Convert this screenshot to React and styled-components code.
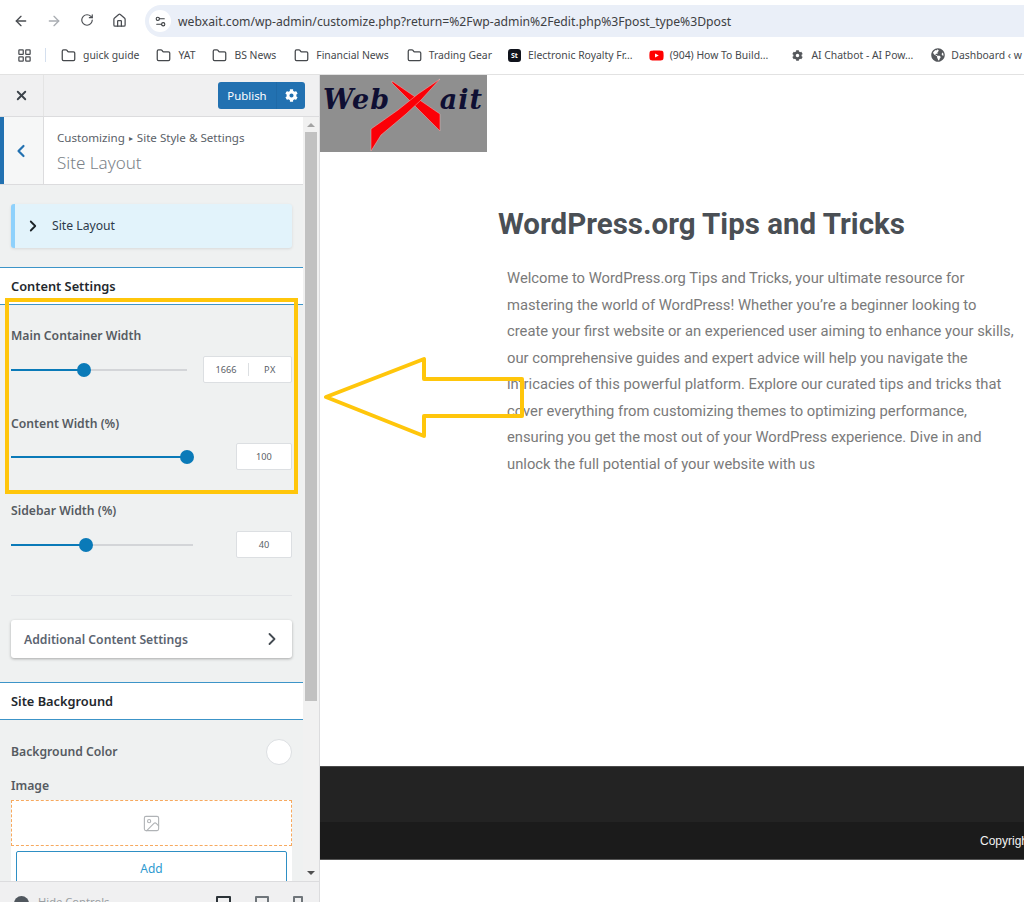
import React from 'react'
import styled, { createGlobalStyle } from 'styled-components'
import {
  ArrowLeft,
  ArrowRight,
  RotateCw,
  Home,
  Folder,
  LayoutGrid,
  Settings2,
  X,
  ChevronLeft,
  ChevronRight,
  Image as ImageIcon,
} from 'lucide-react'
import { FaCog, FaYoutube, FaGlobeAmericas } from 'react-icons/fa'

const GlobalStyle = createGlobalStyle`
  html, body {
    margin: 0;
    padding: 0;
    height: 902px;
    overflow: hidden;
    background: #fff;
    font-family: "Noto Sans", "Open Sans", sans-serif;
  }
  * { box-sizing: border-box; }
`

const Page = styled.div`
  position: relative;
  width: 1024px;
  height: 902px;
  overflow: hidden;
`

const Chrome = styled.div`
  height: 75px;
  background: #fff;
  border-bottom: 1px solid #e2e2e2;
  padding-top: 5px;
`

const NavRow = styled.div`
  display: flex;
  align-items: center;
  height: 32px;
`

const NavButton = styled.div`
  width: 33px;
  display: flex;
  justify-content: center;
  color: ${(p) => (p.$off ? '#a9adb2' : '#4a4d52')};
`

const NavButtons = styled.div`
  display: flex;
  padding-left: 4px;
  width: 145px;
`

const UrlBar = styled.div`
  flex: 1;
  height: 32px;
  display: flex;
  align-items: center;
  gap: 7px;
  background: #eaeff8;
  border-radius: 16px 0 0 16px;
  padding-left: 4px;
  font-size: 12.2px;
  color: #3d4043;
  white-space: nowrap;
`

const SiteInfo = styled.div`
  width: 22px;
  height: 22px;
  border-radius: 50%;
  background: #fff;
  display: flex;
  align-items: center;
  justify-content: center;
  color: #3d4043;
`

const BookmarkRow = styled.div`
  display: flex;
  align-items: center;
  height: 28px;
  margin-top: 4px;
  padding-left: 17px;
  white-space: nowrap;
  overflow: hidden;
  svg { flex-shrink: 0; }
`

const BookmarkSep = styled.div`
  width: 1px;
  height: 14px;
  background: #d4dfee;
  margin: 0 15px 0 13px;
  flex-shrink: 0;
`

const Bookmark = styled.div`
  display: flex;
  align-items: center;
  gap: ${(p) => p.$gap || 7}px;
  margin-right: ${(p) => p.$after || 17}px;
  font-size: 10.4px;
  color: #45484c;
  flex-shrink: 0;
`

const StBadge = styled.span`
  width: 13px;
  height: 13px;
  background: #10131c;
  border-radius: 3px;
  color: #fff;
  font-size: 7px;
  font-weight: 700;
  display: flex;
  align-items: center;
  justify-content: center;
`

const Main = styled.div`
  display: flex;
  height: 827px;
`

const Sidebar = styled.aside`
  width: 320px;
  flex-shrink: 0;
  display: flex;
  flex-direction: column;
  background: #eff1f1;
  border-right: 1px solid #dcdcde;
  color: #50575e;
`

const TopBar = styled.div`
  height: 42px;
  display: flex;
  align-items: center;
  justify-content: space-between;
  background: #f0f0f1;
  border-bottom: 1px solid #dcdcde;
  padding-right: 14px;
`

const CloseButton = styled.div`
  width: 44px;
  height: 41px;
  display: flex;
  align-items: center;
  justify-content: center;
  border-right: 1px solid #e4e4e4;
  color: #3c434a;
`

const PublishGroup = styled.div`
  width: 87px;
  height: 27px;
  display: flex;
  border-radius: 3px;
  overflow: hidden;
  background: #2271b1;
  color: #fff;
  font-size: 11.4px;
`

const PublishLabel = styled.div`
  width: 58px;
  display: flex;
  align-items: center;
  justify-content: center;
`

const PublishGear = styled.div`
  flex: 1;
  display: flex;
  align-items: center;
  justify-content: center;
  border-left: 1px solid #1f6aa8;
`

const Middle = styled.div`
  flex: 1;
  display: flex;
  min-height: 0;
`

const Panel = styled.div`
  width: 303px;
  overflow: hidden;
`

const Scrollbar = styled.div`
  width: 16px;
  display: flex;
  flex-direction: column;
  align-items: center;
  background: #f1f1f1;
`

const ScrollArrow = styled.div`
  width: 0;
  height: 0;
  border-left: 4px solid transparent;
  border-right: 4px solid transparent;
  ${(p) => (p.$down ? 'border-top: 4px solid #505050;' : 'border-bottom: 4px solid #a3a3a3;')}
  margin-top: ${(p) => (p.$down ? '170px' : '6px')};
`

const ScrollThumb = styled.div`
  width: 12px;
  height: 569px;
  background: #c1c1c1;
  margin-top: 5px;
`

const SectionHead = styled.div`
  height: 68px;
  display: flex;
  background: #fff;
  border-bottom: 1px solid #dcdcde;
`

const BackButton = styled.div`
  width: 44px;
  display: flex;
  align-items: center;
  justify-content: center;
  padding-right: 5px;
  background: #f6f7f7;
  border-left: 4px solid #2271b1;
  border-right: 1px solid #dcdcde;
  color: #2271b1;
`

const SectionTitles = styled.div`
  padding: 13px 0 0 13px;
`

const Crumb = styled.div`
  font-size: 11.6px;
  line-height: 16px;
  color: #5a6168;
`

const CrumbArrow = styled.span`
  font-size: 8px;
  margin: 0 4px;
  vertical-align: 1px;
`

const SectionTitle = styled.div`
  font-size: 17px;
  font-weight: 300;
  line-height: 24px;
  margin-top: 5px;
  color: #7b8288;
`

const SubCard = styled.div`
  height: 44px;
  margin: 19px 11px 19px;
  display: flex;
  align-items: center;
  gap: 10px;
  padding: 0 0 1px 9px;
  background: #e2f3fb;
  border-left: 4px solid #8ed1fc;
  border-radius: 3px;
  box-shadow: 0 1px 3px rgba(0, 0, 0, 0.1);
  font-size: 12.2px;
  color: #2d3a4a;
`

const Band = styled.div`
  height: 38px;
  display: flex;
  align-items: center;
  padding-left: 11px;
  background: #fff;
  border-top: 1px solid #3c94c8;
  border-bottom: 1px solid #3c94c8;
  font-size: 12.8px;
  font-weight: 600;
  color: #23282d;
`

const Settings = styled.div`
  padding: 0 11px;
`

const FieldLabel = styled.div`
  font-size: 12.2px;
  font-weight: 600;
  line-height: 16px;
  margin-top: ${(p) => p.$top || 0}px;
  color: #565b61;
`

const SliderRow = styled.div`
  display: flex;
  align-items: center;
  justify-content: space-between;
  height: 27px;
  margin-top: ${(p) => p.$top || 11}px;
`

const Track = styled.div`
  position: relative;
  width: ${(p) => p.$width}px;
  height: 2px;
  background: #d3d5d8;
`

const TrackFill = styled.div`
  height: 100%;
  background: #0a7ab8;
`

const Thumb = styled.div`
  position: absolute;
  top: -6px;
  width: 14px;
  height: 14px;
  margin-left: -7px;
  border-radius: 50%;
  background: #0a7ab8;
`

const ValueBox = styled.div`
  width: ${(p) => p.$width || 56}px;
  height: 27px;
  display: flex;
  align-items: center;
  background: #fff;
  border: 1px solid #dcdfe2;
  border-radius: 2px;
  font-size: 9.2px;
  color: #5b6167;
`

const ValuePart = styled.span`
  flex: 1;
  text-align: center;
  & + & {
    flex: 0 0 43px;
    border-left: 1px solid #dcdfe2;
    letter-spacing: 0.5px;
  }
`

const Divider = styled.div`
  height: 1px;
  background: #e2e4e7;
  margin-top: 37px;
`

const LinkCard = styled.div`
  height: 38px;
  margin: 24px 0;
  display: flex;
  align-items: center;
  justify-content: space-between;
  padding: 0 10px 0 13px;
  background: #fff;
  border-radius: 3px;
  box-shadow: 0 1px 3px rgba(0, 0, 0, 0.3);
  font-size: 12.2px;
  font-weight: 600;
  color: #5b6470;
`

const ColorRow = styled.div`
  display: flex;
  align-items: center;
  justify-content: space-between;
  margin-top: 19px;
  height: 26px;
`

const Swatch = styled.div`
  width: 26px;
  height: 26px;
  border-radius: 50%;
  background: #fff;
  border: 1px solid #dcdfe2;
`

const ImageDrop = styled.div`
  height: 46px;
  margin-top: 6px;
  display: flex;
  align-items: center;
  justify-content: center;
  background: #fff;
  border: 1px dashed #f7a95e;
  color: #b0b3b6;
`

const AddWrap = styled.div`
  background: #fff;
  padding: 5px 5px 0;
`

const AddButton = styled.div`
  height: 34px;
  display: flex;
  align-items: center;
  justify-content: center;
  border: 1px solid #2e8fc4;
  border-radius: 2px;
  font-size: 12px;
  color: #2e9ad0;
`

const Footer = styled.div`
  height: 21px;
  display: flex;
  padding: 14px 0 0 14px;
  background: #f0f0f1;
  border-top: 1px solid #dcdcde;
  overflow: hidden;
`

const HideIcon = styled.div`
  width: 15px;
  height: 15px;
  border-radius: 50%;
  background: #50575e;
  flex-shrink: 0;
`

const HideLabel = styled.div`
  font-size: 11.2px;
  line-height: 15px;
  margin: -2px 0 0 9px;
  color: #9a9fa3;
  flex: 1;
`

const Devices = styled.div`
  display: flex;
  gap: 24px;
  padding-right: 16px;
`

const Device = styled.div`
  width: ${(p) => p.$size}px;
  height: 16px;
  border: 2px solid ${(p) => (p.$on ? '#2c3338' : '#6f757a')};
  border-radius: 1px;
`

const Preview = styled.main`
  flex: 1;
  min-width: 0;
  display: flex;
  flex-direction: column;
  background: #fff;
`

const Logo = styled.div`
  position: relative;
  width: 167px;
  height: 77px;
  flex-shrink: 0;
  display: flex;
  justify-content: space-between;
  padding: 9px 4px 0 3px;
  background: #8f8f8f;
  font-family: "DejaVu Serif", serif;
  font-style: italic;
  font-weight: 700;
  font-size: 27px;
  letter-spacing: 1px;
  color: #0f0f33;
`

const LogoMark = styled.svg`
  position: absolute;
  left: 0;
  top: 0;
`

const Article = styled.article`
  height: 614px;
  flex-shrink: 0;
  padding: 55px 0 0 178px;
  white-space: nowrap;
  overflow: hidden;
`

const Heading = styled.h1`
  margin: 0;
  font-family: Roboto, sans-serif;
  font-size: 29.5px;
  font-weight: 700;
  line-height: 34px;
  color: #4a4f55;
`

const Body = styled.p`
  margin: 24px 0 0 9px;
  font-family: Roboto, sans-serif;
  font-size: 14.78px;
  line-height: 26.5px;
  color: #7a7a7a;
`

const BodyLine = styled.span`
  display: block;
`

const FooterTop = styled.div`
  height: 56px;
  flex-shrink: 0;
  background: #232323;
  border-top: 1px solid #4a4a4a;
`

const FooterBottom = styled.div`
  height: 38px;
  flex-shrink: 0;
  display: flex;
  align-items: center;
  padding-left: 660px;
  background: #1b1b1b;
  border-bottom: 1px solid #555;
  font-family: "Liberation Sans", sans-serif;
  font-size: 12px;
  color: #f2f2f2;
  white-space: nowrap;
  overflow: hidden;
`

const Highlight = styled.div`
  position: absolute;
  left: 5px;
  top: 298px;
  width: 293px;
  height: 196px;
  border: 4px solid #ffc60b;
`

const Arrow = styled.svg`
  position: absolute;
  left: 320px;
  top: 350px;
`

const bookmarks = [
  ['guick guide', 17],
  ['YAT', 17],
  ['BS News', 18],
  ['Financial News', 18],
  ['Trading Gear', 16],
]

const copy = [
  'Welcome to WordPress.org Tips and Tricks, your ultimate resource for',
  'mastering the world of WordPress! Whether you’re a beginner looking to',
  'create your first website or an experienced user aiming to enhance your skills,',
  'our comprehensive guides and expert advice will help you navigate the',
  'intricacies of this powerful platform. Explore our curated tips and tricks that',
  'cover everything from customizing themes to optimizing performance,',
  'ensuring you get the most out of your WordPress experience. Dive in and',
  'unlock the full potential of your website with us',
]

function Slider({ width, percent }) {
  return (
    <Track $width={width}>
      <TrackFill style={{ width: `${percent}%` }} />
      <Thumb style={{ left: `${percent}%` }} />
    </Track>
  )
}

export default function App() {
  return (
    <Page>
      <GlobalStyle />
      <Chrome>
        <NavRow>
          <NavButtons>
            <NavButton><ArrowLeft size={16} /></NavButton>
            <NavButton $off><ArrowRight size={16} /></NavButton>
            <NavButton><RotateCw size={14} /></NavButton>
            <NavButton><Home size={15} /></NavButton>
          </NavButtons>
          <UrlBar>
            <SiteInfo><Settings2 size={13} /></SiteInfo>
            webxait.com/wp-admin/customize.php?return=%2Fwp-admin%2Fedit.php%3Fpost_type%3Dpost
          </UrlBar>
        </NavRow>
        <BookmarkRow>
          <LayoutGrid size={15} color="#4a4d52" />
          <BookmarkSep />
          {bookmarks.map(([name, after]) => (
            <Bookmark key={name} $after={after}>
              <Folder size={15} />
              {name}
            </Bookmark>
          ))}
          <Bookmark $after={16} $gap={7}>
            <StBadge>St</StBadge>
            Electronic Royalty Fr...
          </Bookmark>
          <Bookmark $after={24} $gap={6}>
            <FaYoutube size={15} color="#f00" />
            (904) How To Build...
          </Bookmark>
          <Bookmark $after={18} $gap={8}>
            <FaCog size={11} color="#55585c" />
            AI Chatbot - AI Pow...
          </Bookmark>
          <Bookmark $gap={6}>
            <FaGlobeAmericas size={14} color="#55585c" />
            Dashboard ‹ w
          </Bookmark>
        </BookmarkRow>
      </Chrome>

      <Main>
        <Sidebar>
          <TopBar>
            <CloseButton><X size={15} strokeWidth={3} /></CloseButton>
            <PublishGroup>
              <PublishLabel>Publish</PublishLabel>
              <PublishGear><FaCog size={13} /></PublishGear>
            </PublishGroup>
          </TopBar>
          <Middle>
            <Panel>
              <SectionHead>
                <BackButton><ChevronLeft size={20} strokeWidth={2.6} /></BackButton>
                <SectionTitles>
                  <Crumb>Customizing<CrumbArrow>▸</CrumbArrow>Site Style &amp; Settings</Crumb>
                  <SectionTitle>Site Layout</SectionTitle>
                </SectionTitles>
              </SectionHead>
              <SubCard>
                <ChevronRight size={18} strokeWidth={2.4} color="#1d2327" />
                Site Layout
              </SubCard>
              <Band>Content Settings</Band>
              <Settings>
                <FieldLabel $top={23}>Main Container Width</FieldLabel>
                <SliderRow $top={12}>
                  <Slider width={176} percent={41.5} />
                  <ValueBox $width={89}>
                    <ValuePart>1666</ValuePart>
                    <ValuePart>PX</ValuePart>
                  </ValueBox>
                </SliderRow>
                <FieldLabel $top={33}>Content Width (%)</FieldLabel>
                <SliderRow>
                  <Slider width={176} percent={100} />
                  <ValueBox><ValuePart>100</ValuePart></ValueBox>
                </SliderRow>
                <FieldLabel $top={33}>Sidebar Width (%)</FieldLabel>
                <SliderRow $top={12}>
                  <Slider width={182} percent={41} />
                  <ValueBox><ValuePart>40</ValuePart></ValueBox>
                </SliderRow>
                <Divider />
                <LinkCard>
                  Additional Content Settings
                  <ChevronRight size={20} strokeWidth={2.2} color="#444b52" />
                </LinkCard>
              </Settings>
              <Band>Site Background</Band>
              <Settings>
                <ColorRow>
                  <FieldLabel>Background Color</FieldLabel>
                  <Swatch />
                </ColorRow>
                <FieldLabel $top={13}>Image</FieldLabel>
                <ImageDrop><ImageIcon size={19} strokeWidth={1.4} /></ImageDrop>
                <AddWrap><AddButton>Add</AddButton></AddWrap>
              </Settings>
            </Panel>
            <Scrollbar>
              <ScrollArrow />
              <ScrollThumb />
              <ScrollArrow $down />
            </Scrollbar>
          </Middle>
          <Footer>
            <HideIcon />
            <HideLabel>Hide Controls</HideLabel>
            <Devices>
              <Device $size={15} $on />
              <Device $size={14} />
              <Device $size={10} />
            </Devices>
          </Footer>
        </Sidebar>

        <Preview>
          <Logo>
            <span>Web</span>
            <span>ait</span>
            <LogoMark width="167" height="77" viewBox="0 0 167 77">
              <path
                d="M72 6 L120 39 L120 56 L96 32 L72 8 Z"
                fill="#fb0007"
                stroke="#e9b9b9"
                strokeWidth="0.5"
              />
              <path
                d="M120 4 L98 19 L78 35 L51 54 L51 76 L61 60 L86 39 L101 25 Z"
                fill="#fb0007"
                stroke="#e9b9b9"
                strokeWidth="0.5"
              />
            </LogoMark>
          </Logo>
          <Article>
            <Heading>WordPress.org Tips and Tricks</Heading>
            <Body>
              {copy.map((line) => (
                <BodyLine key={line}>{line}</BodyLine>
              ))}
            </Body>
          </Article>
          <FooterTop />
          <FooterBottom>Copyright</FooterBottom>
        </Preview>
      </Main>

      <Highlight />
      <Arrow width="210" height="100" viewBox="0 0 210 100">
        <path
          d="M6 47 L104 9 L104 29 L202 29 L202 66 L104 66 L104 86 Z"
          fill="none"
          stroke="#ffc60b"
          strokeWidth="4"
          strokeLinejoin="round"
        />
      </Arrow>
    </Page>
  )
}
